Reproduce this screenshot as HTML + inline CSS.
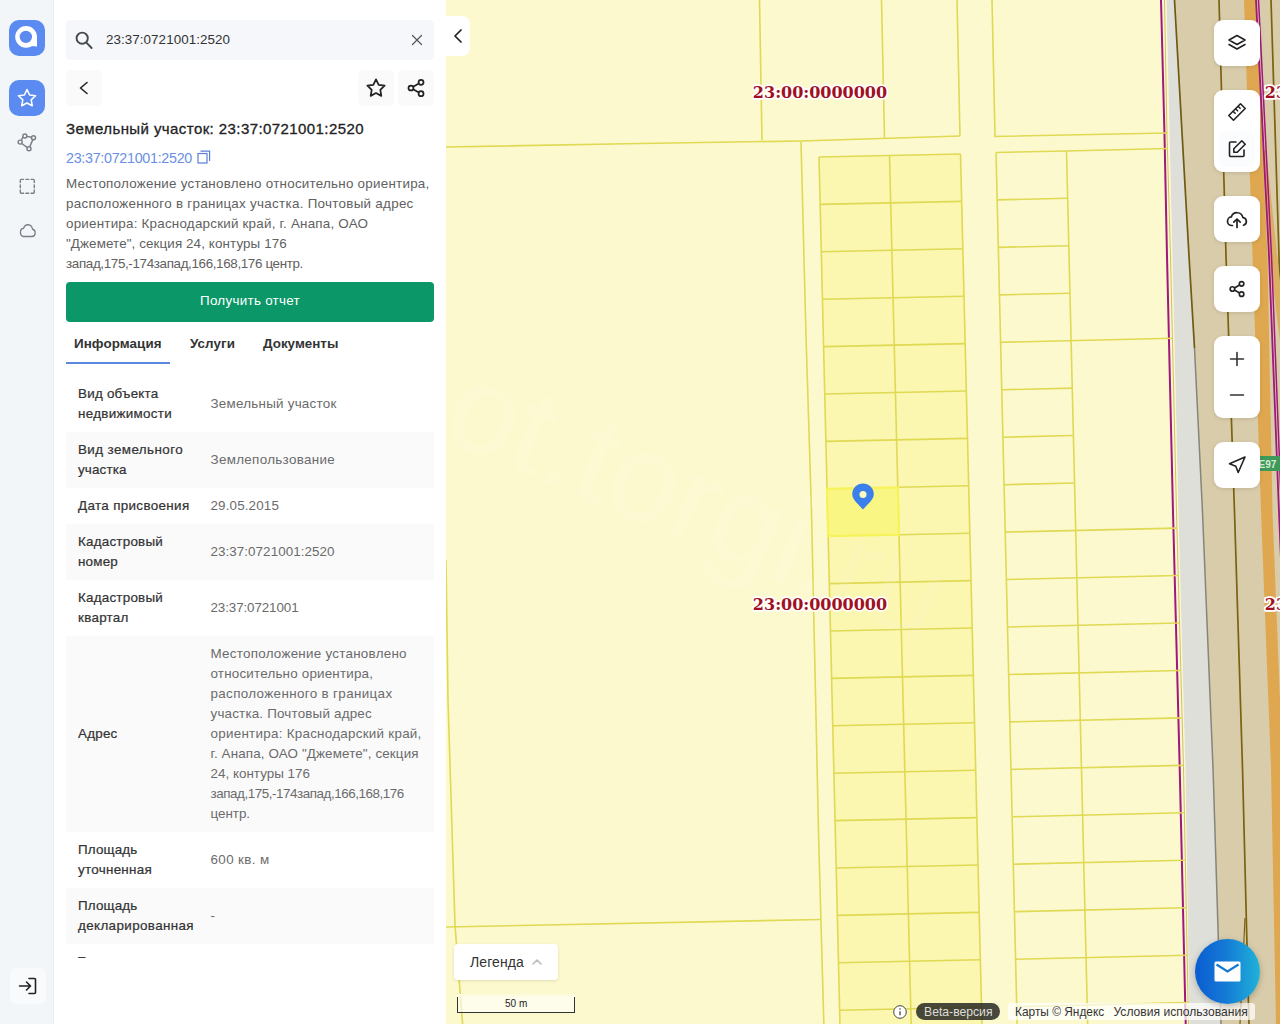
<!DOCTYPE html>
<html lang="ru">
<head>
<meta charset="utf-8">
<title>Земельный участок: 23:37:0721001:2520</title>
<style>
*{box-sizing:border-box;margin:0;padding:0}
html,body{width:1280px;height:1024px;overflow:hidden;background:#fff}
body{font-family:"Liberation Sans",sans-serif;color:#333;position:relative}
.abs{position:absolute}
#sidebar{position:absolute;left:0;top:0;width:54px;height:1024px;background:#f3f6f9;border-right:1px solid #e9eef3}
#panel{position:absolute;left:54px;top:0;width:392px;height:1024px;background:#fff}
.sbtn{position:absolute;left:9px;width:36px;height:36px;border-radius:10px;background:#5b8af0}
.t{position:absolute;white-space:nowrap;line-height:20px}
.t.b{font-weight:bold}
.t.m{-webkit-text-stroke:0.22px #333}
.t.sb{-webkit-text-stroke:0.3px #222}
.ibtn{position:absolute;width:36px;height:36px;border-radius:5px;background:#fafafb}
#search{position:absolute;left:66px;top:20px;width:368px;height:40px;background:#f5f7fa;border-radius:4px}
#report{position:absolute;left:66px;top:282px;width:368px;height:40px;background:#0b9767;border-radius:4px;color:#fff;text-align:center;font-size:13.6px;line-height:37px}
.row{position:absolute;left:66px;width:368px}
.row.g{background:#fafafb}
.lab{position:absolute;left:12px;font-size:13.4px;line-height:20px;color:#333;white-space:nowrap;-webkit-text-stroke:0.3px #333}
.val{position:absolute;left:144px;font-size:13.4px;line-height:20px;color:#6a6a6a;white-space:nowrap}
#map{position:absolute;left:446px;top:0;width:834px;height:1024px;background:#fdf9cf;overflow:hidden}
.mbtn{position:absolute;left:1214px;width:46px;background:#fff;border-radius:9px;box-shadow:0 1px 4px rgba(0,0,0,.12)}
</style>
</head>
<body>
<!-- MAP -->
<div id="map">
<svg id="mapsvg" class="abs" style="left:-446px;top:0" width="1280" height="1024" viewBox="0 0 1280 1024">
<!--MAPSTART-->
<polygon points="1161.0,0.0 1280.0,0.0 1280.0,1024.0 1185.7,1024.0" fill="#d9ccaa" />
<polygon points="1161.0,0.0 1167.0,0.0 1173.0,256.0 1179.0,512.0 1186.0,768.0 1190.0,1024.0 1185.7,1024.0 1179.7,768.0 1173.0,512.0 1167.0,256.0 1164.5,135.0" fill="#fbf7d4" />
<polygon points="1166.5,0.0 1174.5,0.0 1189.0,256.0 1194.5,348.0 1202.5,512.0 1213.0,768.0 1221.0,1024.0 1189.5,1024.0 1185.5,768.0 1178.5,512.0 1172.5,256.0" fill="#dfdfda" />
<polygon points="1244.0,0.0 1256.0,0.0 1267.5,256.0 1272.5,512.0 1280.0,700.0 1280.0,1024.0 1276.0,1024.0 1271.0,768.0 1261.0,512.0 1252.5,256.0" fill="#dfa850" />
<polyline points="1174.5,0.0 1189.0,256.0 1194.5,348.0" fill="none" stroke="#6e5a10" stroke-width="1.7" />
<polyline points="1194.5,348.0 1202.5,512.0 1213.0,768.0 1221.0,1024.0" fill="none" stroke="#85857a" stroke-width="1.5" />
<polyline points="1219.0,0.0 1226.0,256.0 1234.5,512.0 1242.5,768.0 1249.0,1024.0" fill="none" stroke="#7a6210" stroke-width="1.7" />
<polyline points="1245.0,918.0 1240.0,1024.0" fill="none" stroke="#7a6210" stroke-width="1.2" />
<polyline points="1271.0,0.0 1279.0,256.0 1280.0,300.0" fill="none" stroke="#7a6210" stroke-width="1.7" />
<polyline points="1164.5,0.0 1167.0,135.0 1170.5,256.0 1176.5,512.0 1183.5,768.0 1188.5,1024.0" fill="none" stroke="#cfc25c" stroke-width="1" />
<polyline points="1161.0,0.0 1164.5,135.0 1167.0,256.0 1173.0,512.0 1179.7,768.0 1185.7,1024.0" fill="none" stroke="#a0187a" stroke-width="2" />
<polygon points="1261.0,150.0 1266.0,150.0 1281.0,290.0 1281.0,350.0 1270.0,262.0" fill="#dcae62" />
<polyline points="1256.0,0.0 1269.0,256.0 1279.0,512.0 1281.0,560.0" fill="none" stroke="#a0187a" stroke-width="1.8" />
<polyline points="1258.5,0.0 1271.5,256.0 1281.5,512.0" fill="none" stroke="#a0187a" stroke-width="1.5" />
<rect x="1255" y="456" width="28" height="15" rx="2" fill="#3d9a5a"/>
<text x="1258.500" y="468" font-family="Liberation Sans, sans-serif" font-size="10" font-weight="bold" fill="#d4ecd4">E97</text>
<polygon points="819.0,157.0 960.5,154.0 982.1,1030.0 840.1,1030.0" fill="#fbf6b0" />
<polyline points="819.0,157.0 840.1,1030.0" fill="none" stroke="#dfd954" stroke-width="1.6" />
<polyline points="889.5,155.5 911.3,1030.0" fill="none" stroke="#dfd954" stroke-width="1.6" />
<polyline points="960.5,154.0 982.1,1030.0" fill="none" stroke="#dfd954" stroke-width="1.6" />
<polyline points="819.0,157.0 960.5,154.0" fill="none" stroke="#dfd954" stroke-width="1.6" />
<polyline points="820.1,204.4 961.7,201.4" fill="none" stroke="#dfd954" stroke-width="1.6" />
<polyline points="821.3,251.8 962.8,248.8" fill="none" stroke="#dfd954" stroke-width="1.6" />
<polyline points="822.4,299.2 964.0,296.2" fill="none" stroke="#dfd954" stroke-width="1.6" />
<polyline points="823.6,346.6 965.2,343.6" fill="none" stroke="#dfd954" stroke-width="1.6" />
<polyline points="824.7,394.0 966.4,391.0" fill="none" stroke="#dfd954" stroke-width="1.6" />
<polyline points="825.9,441.4 967.5,438.4" fill="none" stroke="#dfd954" stroke-width="1.6" />
<polyline points="897.8,487.3 968.7,485.8" fill="none" stroke="#dfd954" stroke-width="1.6" />
<polyline points="899.0,534.7 969.9,533.2" fill="none" stroke="#dfd954" stroke-width="1.6" />
<polyline points="829.3,583.6 971.0,580.6" fill="none" stroke="#dfd954" stroke-width="1.6" />
<polyline points="830.5,631.0 972.2,628.0" fill="none" stroke="#dfd954" stroke-width="1.6" />
<polyline points="831.6,678.4 973.4,675.4" fill="none" stroke="#dfd954" stroke-width="1.6" />
<polyline points="832.8,725.8 974.6,722.8" fill="none" stroke="#dfd954" stroke-width="1.6" />
<polyline points="833.9,773.2 975.7,770.2" fill="none" stroke="#dfd954" stroke-width="1.6" />
<polyline points="835.1,820.6 976.9,817.6" fill="none" stroke="#dfd954" stroke-width="1.6" />
<polyline points="836.2,868.0 978.1,865.0" fill="none" stroke="#dfd954" stroke-width="1.6" />
<polyline points="837.4,915.4 979.2,912.4" fill="none" stroke="#dfd954" stroke-width="1.6" />
<polyline points="838.5,962.8 980.4,959.8" fill="none" stroke="#dfd954" stroke-width="1.6" />
<polyline points="839.7,1010.2 981.6,1007.2" fill="none" stroke="#dfd954" stroke-width="1.6" />
<polyline points="801.0,141.5 806.0,336.0 811.5,512.0 818.7,840.0 824.0,1030.0" fill="none" stroke="#dfd954" stroke-width="1.6" />
<polyline points="446.0,147.0 640.0,143.5 801.0,141.0 960.0,136.0" fill="none" stroke="#dfd954" stroke-width="1.6" />
<polyline points="759.5,0.0 762.0,140.5" fill="none" stroke="#dfd954" stroke-width="1.6" />
<polyline points="881.5,0.0 884.5,138.3" fill="none" stroke="#dfd954" stroke-width="1.6" />
<polyline points="957.0,0.0 960.0,136.0" fill="none" stroke="#dfd954" stroke-width="1.6" />
<polyline points="992.0,0.0 995.0,136.5 1167.5,133.0" fill="none" stroke="#dfd954" stroke-width="1.6" />
<polyline points="996.0,152.5 1066.5,151.0 1167.8,148.5" fill="none" stroke="#dfd954" stroke-width="1.6" />
<polyline points="996.0,152.5 1017.3,1030.0" fill="none" stroke="#dfd954" stroke-width="1.6" />
<polyline points="1066.5,151.0 1087.8,1030.0" fill="none" stroke="#dfd954" stroke-width="1.6" />
<polyline points="997.2,199.9 1067.6,198.2" fill="none" stroke="#dfd954" stroke-width="1.6" />
<polyline points="998.3,247.4 1068.8,245.7" fill="none" stroke="#dfd954" stroke-width="1.6" />
<polyline points="999.5,294.9 1070.0,293.2" fill="none" stroke="#dfd954" stroke-width="1.6" />
<polyline points="1000.6,342.3 1171.9,338.3" fill="none" stroke="#dfd954" stroke-width="1.6" />
<polyline points="1001.8,389.8 1072.3,388.1" fill="none" stroke="#dfd954" stroke-width="1.6" />
<polyline points="1002.9,437.2 1073.4,435.5" fill="none" stroke="#dfd954" stroke-width="1.6" />
<polyline points="1004.1,484.7 1074.6,483.0" fill="none" stroke="#dfd954" stroke-width="1.6" />
<polyline points="1005.2,532.1 1176.4,528.1" fill="none" stroke="#dfd954" stroke-width="1.6" />
<polyline points="1006.4,579.5 1177.7,575.5" fill="none" stroke="#dfd954" stroke-width="1.6" />
<polyline points="1007.5,627.0 1178.9,623.0" fill="none" stroke="#dfd954" stroke-width="1.6" />
<polyline points="1008.7,674.5 1180.1,670.5" fill="none" stroke="#dfd954" stroke-width="1.6" />
<polyline points="1009.9,721.9 1181.4,717.9" fill="none" stroke="#dfd954" stroke-width="1.6" />
<polyline points="1011.0,769.4 1182.6,765.4" fill="none" stroke="#dfd954" stroke-width="1.6" />
<polyline points="1012.2,816.8 1183.8,812.8" fill="none" stroke="#dfd954" stroke-width="1.6" />
<polyline points="1013.3,864.2 1184.9,860.2" fill="none" stroke="#dfd954" stroke-width="1.6" />
<polyline points="1014.5,911.7 1186.0,907.7" fill="none" stroke="#dfd954" stroke-width="1.6" />
<polyline points="1015.6,959.2 1187.1,955.2" fill="none" stroke="#dfd954" stroke-width="1.6" />
<polyline points="1016.8,1006.6 1188.2,1002.6" fill="none" stroke="#dfd954" stroke-width="1.6" />
<polyline points="446.0,927.0 820.5,919.5" fill="none" stroke="#dfd954" stroke-width="1.6" />
<polyline points="446.0,560.0 448.0,700.0 455.0,925.0 463.0,1030.0" fill="none" stroke="#dfd954" stroke-width="1.6" />
<polygon points="827.0,488.8 897.8,487.3 899.0,534.7 828.2,536.2" fill="#f9f684" stroke="#f6f35a" stroke-width="2.300"/>
<!--MAPEND-->
</svg>
</div>

<!-- SIDEBAR -->
<div id="sidebar">
<!--SBSTART-->
<div class="sbtn" style="top:20px">
 <svg class="abs" style="left:0;top:0" width="36" height="36" viewBox="0 0 36 36"><path fill="#fff" fill-rule="evenodd" d="M17.100 5.950a10.900 10.900 0 1 0 0 21.800a10.900 10.900 0 1 0 0-21.800zM16.850 10.650a6.200 6.200 0 1 1 0 12.400a6.200 6.200 0 0 1 0-12.400z"/><path fill="#fff" d="M28 16.850V26.400L22 25.900z"/></svg>
</div>
<div class="sbtn" style="top:80px">
 <svg class="abs" style="left:7px;top:7px" width="22" height="22" viewBox="0 0 24 24" fill="none" stroke="#fff" stroke-width="1.700" stroke-linejoin="round"><path d="M12 2.8l2.85 5.9 6.45.9-4.7 4.5 1.15 6.400L12 17.450l-5.750 3.050 1.150-6.400-4.700-4.500 6.450-.900z"/></svg>
</div>
<svg class="abs" style="left:15.300px;top:130.500px" width="23" height="23" viewBox="0 0 24 24" fill="none" stroke="#7a7f87" stroke-width="1.5"><circle cx="10.3" cy="5.2" r="2.1"/><circle cx="19.3" cy="7" r="2.1"/><circle cx="5.4" cy="11.6" r="2.1"/><circle cx="14.6" cy="18.6" r="2.1"/><path d="M12.400 5.600l4.900 1M8.300 6.300L6.600 9.800M7 13l5.900 4.300M18.600 9l-3.300 7.600"/></svg>
<svg class="abs" style="left:17.700px;top:176.700px" width="18.600" height="18.600" viewBox="0 0 20 20" fill="none" stroke="#7a7f87" stroke-width="1.5" stroke-linecap="round"><path d="M2.5 6V3.500a1 1 0 0 1 1-1H6M8.500 2.500h3M14 2.500h2.500a1 1 0 0 1 1 1V6M17.500 8.500v3M17.500 14v2.500a1 1 0 0 1-1 1H14M11.500 17.500h-3M6 17.500H3.500a1 1 0 0 1-1-1V14M2.500 11.500v-3"/></svg>
<svg class="abs" style="left:17.700px;top:219.500px" width="18.700" height="20" preserveAspectRatio="none" viewBox="0 0 22 20" fill="none" stroke="#7a7f87" stroke-width="1.5" stroke-linejoin="round"><path d="M6.200 16.500h10.300a3.700 3.700 0 0 0 .6-7.350A5.500 5.500 0 0 0 6.600 8.300a4.150 4.150 0 0 0-.4 8.200z"/></svg>
<div class="abs" style="left:10px;top:968px;width:36px;height:36px;border-radius:6px;background:#f8fafc"></div>
<svg class="abs" style="left:17px;top:976px" width="22" height="20" viewBox="0 0 22 20" fill="none" stroke="#222" stroke-width="1.6" stroke-linecap="round" stroke-linejoin="round"><path d="M12 2.500h5.500a1 1 0 0 1 1 1v13a1 1 0 0 1-1 1H12M2.500 10h10.500M9.500 6l4 4-4 4"/></svg>
<!--SBEND-->
</div>

<!-- PANEL -->
<div id="panel"></div>
<!--PANELSTART-->
<div id="search">
 <svg class="abs" style="left:8px;top:9px" width="24" height="24" viewBox="0 0 24 24" fill="none" stroke="#454a4f" stroke-width="1.900" stroke-linecap="round"><circle cx="8.2" cy="9.2" r="5.6"/><path d="M12.4 13.6L17.6 19"/></svg>
 <svg class="abs" style="left:345px;top:14px" width="12" height="12" viewBox="0 0 12 12" fill="none" stroke="#555" stroke-width="1.2" stroke-linecap="round"><path d="M1.5 1.5L10.5 10.5M10.5 1.5L1.5 10.5"/></svg>
</div>
<div class="ibtn" style="left:66px;top:70px"><svg class="abs" style="left:12px;top:11px" width="12" height="14" viewBox="0 0 12 14" fill="none" stroke="#222" stroke-width="1.6" stroke-linecap="round" stroke-linejoin="round"><path d="M9 1.5L2.5 7L9 12.5"/></svg></div>
<div class="ibtn" style="left:358px;top:70px"><svg class="abs" style="left:7px;top:7px" width="22" height="22" viewBox="0 0 24 24" fill="none" stroke="#222" stroke-width="1.9" stroke-linejoin="round"><path d="M12 2.6l2.9 6 6.5.9-4.7 4.6 1.1 6.5L12 17.5l-5.8 3.1 1.1-6.5L2.6 9.5l6.5-.9z"/></svg></div>
<div class="ibtn" style="left:398px;top:70px"><svg class="abs" style="left:7px;top:7px" width="22" height="22" viewBox="0 0 24 24" fill="none" stroke="#222" stroke-width="1.9"><circle cx="17.5" cy="5.8" r="2.7"/><circle cx="6.5" cy="12" r="2.7"/><circle cx="17.5" cy="18.2" r="2.7"/><path d="M8.9 10.7l6.2-3.5M8.9 13.3l6.2 3.5"/></svg></div>
<svg class="abs" style="left:197px;top:150px" width="14" height="14" viewBox="0 0 14 14" fill="none" stroke="#5b7fd6" stroke-width="1.2"><rect x="1" y="3.5" width="9" height="9.5"/><path d="M3.5 1.2H12.6V11"/></svg>
<div id="report"></div>
<div class="abs" style="left:66px;top:361.500px;width:104px;height:2.500px;background:#5b88e0"></div>
<div class="row g" style="top:432px;height:56px"></div>
<div class="row g" style="top:524px;height:56px"></div>
<div class="row g" style="top:636px;height:196px"></div>
<div class="row g" style="top:888px;height:56px"></div>
<span class="t" style="left:106px;top:29.5px;font-size:13.4px;color:#333;letter-spacing:0.062px">23:37:0721001:2520</span>
<span class="t sb" style="left:66px;top:118.80000000000001px;font-size:15px;color:#222;letter-spacing:0.419px">Земельный участок: 23:37:0721001:2520</span>
<span class="t" style="left:66px;top:147.5px;font-size:14.3px;color:#6a8fe6;letter-spacing:-0.288px">23:37:0721001:2520</span>
<span class="t" style="left:66px;top:173.8px;font-size:13.4px;color:#616161;letter-spacing:0.246px">Местоположение установлено относительно ориентира,</span>
<span class="t" style="left:66px;top:193.8px;font-size:13.4px;color:#616161;letter-spacing:0.285px">расположенного в границах участка. Почтовый адрес</span>
<span class="t" style="left:66px;top:213.8px;font-size:13.4px;color:#616161;letter-spacing:0.220px">ориентира: Краснодарский край, г. Анапа, ОАО</span>
<span class="t" style="left:66px;top:233.8px;font-size:13.4px;color:#616161;letter-spacing:0.105px">&quot;Джемете&quot;, секция 24, контуры 176</span>
<span class="t" style="left:66px;top:253.8px;font-size:13.4px;color:#616161;letter-spacing:-0.352px">запад,175,-174запад,166,168,176 центр.</span>
<span class="t" style="left:200px;top:291.2px;font-size:13.4px;color:#fff;letter-spacing:0.287px">Получить отчет</span>
<span class="t b" style="left:74px;top:334.2px;font-size:13.4px;color:#333;letter-spacing:0.071px">Информация</span>
<span class="t b" style="left:190px;top:334.2px;font-size:13.4px;color:#333;letter-spacing:0.078px">Услуги</span>
<span class="t b" style="left:263px;top:334.2px;font-size:13.4px;color:#333;letter-spacing:0.011px">Документы</span>
<span class="t m" style="left:78px;top:383.5px;font-size:13.4px;color:#333;letter-spacing:0.239px">Вид объекта</span>
<span class="t m" style="left:78px;top:403.5px;font-size:13.4px;color:#333;letter-spacing:0.303px">недвижимости</span>
<span class="t" style="left:210.5px;top:393.5px;font-size:13.4px;color:#6b6b6b;letter-spacing:0.244px">Земельный участок</span>
<span class="t m" style="left:78px;top:439.5px;font-size:13.4px;color:#333;letter-spacing:0.410px">Вид земельного</span>
<span class="t m" style="left:78px;top:459.5px;font-size:13.4px;color:#333;letter-spacing:0.148px">участка</span>
<span class="t" style="left:210.5px;top:449.5px;font-size:13.4px;color:#6b6b6b;letter-spacing:0.320px">Землепользование</span>
<span class="t m" style="left:78px;top:495.5px;font-size:13.4px;color:#333;letter-spacing:0.351px">Дата присвоения</span>
<span class="t" style="left:210.5px;top:495.5px;font-size:13.4px;color:#6b6b6b;letter-spacing:0.147px">29.05.2015</span>
<span class="t m" style="left:78px;top:531.5px;font-size:13.4px;color:#333;letter-spacing:0.232px">Кадастровый</span>
<span class="t m" style="left:78px;top:551.5px;font-size:13.4px;color:#333;letter-spacing:0.209px">номер</span>
<span class="t" style="left:210.5px;top:541.5px;font-size:13.4px;color:#6b6b6b;letter-spacing:0.062px">23:37:0721001:2520</span>
<span class="t m" style="left:78px;top:587.5px;font-size:13.4px;color:#333;letter-spacing:0.232px">Кадастровый</span>
<span class="t m" style="left:78px;top:607.5px;font-size:13.4px;color:#333;letter-spacing:0.290px">квартал</span>
<span class="t" style="left:210.5px;top:597.5px;font-size:13.4px;color:#6b6b6b;letter-spacing:-0.106px">23:37:0721001</span>
<span class="t m" style="left:78px;top:723.5px;font-size:13.4px;color:#333;letter-spacing:0.231px">Адрес</span>
<span class="t" style="left:210.5px;top:643.5px;font-size:13.4px;color:#6b6b6b;letter-spacing:0.265px">Местоположение установлено</span>
<span class="t" style="left:210.5px;top:663.5px;font-size:13.4px;color:#6b6b6b;letter-spacing:0.200px">относительно ориентира,</span>
<span class="t" style="left:210.5px;top:683.5px;font-size:13.4px;color:#6b6b6b;letter-spacing:0.361px">расположенного в границах</span>
<span class="t" style="left:210.5px;top:703.5px;font-size:13.4px;color:#6b6b6b;letter-spacing:0.188px">участка. Почтовый адрес</span>
<span class="t" style="left:210.5px;top:723.5px;font-size:13.4px;color:#6b6b6b;letter-spacing:0.270px">ориентира: Краснодарский край,</span>
<span class="t" style="left:210.5px;top:743.5px;font-size:13.4px;color:#6b6b6b;letter-spacing:0.136px">г. Анапа, ОАО &quot;Джемете&quot;, секция</span>
<span class="t" style="left:210.5px;top:763.5px;font-size:13.4px;color:#6b6b6b;letter-spacing:0.023px">24, контуры 176</span>
<span class="t" style="left:210.5px;top:783.5px;font-size:13.4px;color:#6b6b6b;letter-spacing:-0.441px">запад,175,-174запад,166,168,176</span>
<span class="t" style="left:210.5px;top:803.5px;font-size:13.4px;color:#6b6b6b;letter-spacing:-0.029px">центр.</span>
<span class="t m" style="left:78px;top:839.5px;font-size:13.4px;color:#333;letter-spacing:0.158px">Площадь</span>
<span class="t m" style="left:78px;top:859.5px;font-size:13.4px;color:#333;letter-spacing:0.286px">уточненная</span>
<span class="t" style="left:210.5px;top:849.5px;font-size:13.4px;color:#6b6b6b;letter-spacing:0.368px">600 кв. м</span>
<span class="t m" style="left:78px;top:895.5px;font-size:13.4px;color:#333;letter-spacing:0.158px">Площадь</span>
<span class="t m" style="left:78px;top:915.5px;font-size:13.4px;color:#333;letter-spacing:0.382px">декларированная</span>
<span class="t" style="left:210.5px;top:905.5px;font-size:13.4px;color:#6b6b6b;letter-spacing:0.000px">-</span>
<span class="t" style="left:78px;top:947px;font-size:13.4px;color:#333;letter-spacing:0.000px">–</span>
<!--PANELEND-->

<!--UISTART-->
<svg class="abs" style="left:446px;top:0;pointer-events:none" width="834" height="1024" viewBox="446 0 834 1024">
 <g transform="translate(438.5,437) rotate(23)" opacity="0.07"><text x="0" y="0" font-family="Liberation Sans, sans-serif" font-size="125" fill="#fff">ot.torgi.ru</text></g>
 <g font-family="DejaVu Serif, Liberation Serif, serif" font-weight="bold" font-size="16" fill="#a0101e" stroke="#fff" stroke-width="3.5" stroke-linejoin="round" paint-order="stroke" text-anchor="middle">
  <text x="820" y="98">23:00:0000000</text>
  <text x="820" y="610">23:00:0000000</text>
  <text x="1332" y="98">23:00:0000000</text>
  <text x="1332" y="610">23:00:0000000</text>
 </g>
 <path d="M863 509.500c-3.300-4.300-10.800-9.500-10.800-15.300a10.800 10.800 0 0 1 21.600 0c0 5.800-7.500 11-10.800 15.300z" fill="#3b80ea"/>
 <circle cx="863" cy="494.600" r="3.500" fill="#fbf8c0"/>
</svg>
<div class="abs" style="left:446px;top:16px;width:24px;height:40px;background:#fff;border-radius:0 8px 8px 0"><svg class="abs" style="left:6px;top:12px" width="12" height="16" viewBox="0 0 12 16" fill="none" stroke="#222" stroke-width="1.700" stroke-linecap="round" stroke-linejoin="round"><path d="M9 2L3 8l6 6"/></svg></div>

<div class="mbtn" style="top:20px;height:46px"><svg class="abs" style="left:12px;top:12px" width="22" height="22" viewBox="0 0 22 22" fill="none" stroke="#222" stroke-width="1.600" stroke-linejoin="round" stroke-linecap="round"><path d="M11 3.500l8 4.500-8 4.500-8-4.500z"/><path d="M3 12.500l8 4.500 8-4.500"/></svg></div>
<div class="mbtn" style="top:90px;height:82px">
 <div class="abs" style="left:5px;top:41px;width:36px;height:36px;border-radius:6px;background:#fbfcfd"></div>
 <svg class="abs" style="left:12px;top:11px" width="22" height="22" viewBox="0 0 22 22" fill="none" stroke="#222" stroke-width="1.600" stroke-linejoin="round" stroke-linecap="round"><path d="M14.500 2.800l4.700 4.700L7.500 19.200 2.800 14.500z"/><path d="M12.300 5.500l1.800 1.800M9.800 8l1.800 1.800M7.300 10.500l1.800 1.800"/></svg>
 <svg class="abs" style="left:12px;top:48px" width="22" height="22" viewBox="0 0 22 22" fill="none" stroke="#222" stroke-width="1.600" stroke-linejoin="round" stroke-linecap="round"><path d="M10 4H4.500a1 1 0 0 0-1 1v12.500a1 1 0 0 0 1 1H17a1 1 0 0 0 1-1V12"/><path d="M15.800 2.800l3.400 3.400-8 8H7.800v-3.400z"/></svg>
</div>
<div class="mbtn" style="top:196px;height:46px"><svg class="abs" style="left:11px;top:11px" width="24" height="24" viewBox="0 0 24 24" fill="none" stroke="#222" stroke-width="1.700" stroke-linejoin="round" stroke-linecap="round"><path d="M7.500 18.500H6.800a4.300 4.300 0 0 1-.5-8.570A6 6 0 0 1 17.900 10.500a4 4 0 0 1 .6 7.800"/><path d="M12 20.500v-8.500M8.800 15.200L12 12l3.200 3.200"/></svg></div>
<div class="mbtn" style="top:266px;height:46px"><svg class="abs" style="left:13px;top:13px" width="20" height="20" viewBox="0 0 24 24" fill="none" stroke="#222" stroke-width="2"><circle cx="17.500" cy="5.800" r="2.700"/><circle cx="6.500" cy="12" r="2.700"/><circle cx="17.500" cy="18.200" r="2.700"/><path d="M8.900 10.700l6.200-3.500M8.900 13.300l6.200 3.500"/></svg></div>
<div class="mbtn" style="top:336px;height:82px"><svg class="abs" style="left:15px;top:15px" width="16" height="52" viewBox="0 0 16 52" fill="none" stroke="#333" stroke-width="1.600" stroke-linecap="round"><path d="M1.500 8h13M8 1.500v13M1.500 44h13"/></svg></div>
<div class="mbtn" style="top:442px;height:46px"><svg class="abs" style="left:12px;top:12px" width="22" height="22" viewBox="0 0 22 22" fill="none" stroke="#222" stroke-width="1.600" stroke-linejoin="round"><path d="M19 3L3.500 9.800l6.300 2.400 2.400 6.300z"/></svg></div>

<div class="abs" style="left:454px;top:944px;width:104px;height:36px;background:#fff;border-radius:4px;box-shadow:0 1px 3px rgba(0,0,0,.12)"></div>
<span class="t" style="left:470px;top:951.500px;font-size:14px;color:#333;letter-spacing:0.1px">Легенда</span>
<svg class="abs" style="left:531px;top:957px" width="12" height="10" viewBox="0 0 12 10" fill="none" stroke="#bbb" stroke-width="1.600" stroke-linecap="round" stroke-linejoin="round"><path d="M2 7l4-4 4 4"/></svg>

<div class="abs" style="left:457px;top:994px;width:118px;height:19px;background:rgba(255,255,255,.6);border:1px solid #333;border-top:none"></div>
<div class="abs" style="left:457px;top:994px;width:118px;height:3px;background:#fdfbe0"></div>
<span class="t" style="left:505px;top:994px;font-size:10px;color:#222">50 m</span>

<svg class="abs" style="left:892px;top:1004px" width="16" height="16" viewBox="0 0 16 16"><circle cx="8" cy="8" r="6.300" fill="#fff" stroke="#444" stroke-width="1"/><path d="M8 7.200v4" stroke="#444" stroke-width="1.300" fill="none"/><circle cx="8" cy="5" r="0.800" fill="#444"/></svg>
<div class="abs" style="left:916px;top:1003px;width:84px;height:17px;border-radius:9px;background:rgba(40,40,35,.85)"></div>
<span class="t" style="left:924px;top:1001.500px;font-size:12.200px;color:#deded8">Beta-версия</span>
<div class="abs" style="left:1008px;top:1003px;width:247px;height:17px;border-radius:3px;background:rgba(255,255,255,.72)"></div>
<span class="t" style="left:1015px;top:1001.500px;font-size:11.900px;color:#333">Карты © Яндекс</span>
<span class="t" style="left:1113.500px;top:1001.500px;font-size:12.100px;color:#333">Условия использования</span>

<div class="abs" style="left:1195px;top:938.500px;width:65px;height:65px;border-radius:50%;background:linear-gradient(90deg,#0a5dd0 0%,#1478d6 45%,#20b2d8 100%);box-shadow:0 2px 6px rgba(0,0,0,.25)"></div>
<svg class="abs" style="left:1214px;top:961px" width="27" height="21" viewBox="0 0 27 21"><rect x="0.500" y="0.500" width="26" height="20" rx="1.500" fill="#fff"/><path d="M2.500 3.500l11 7 11-7" fill="none" stroke="#1478d6" stroke-width="2.200"/></svg>
<!--UIEND-->
</body>
</html>
